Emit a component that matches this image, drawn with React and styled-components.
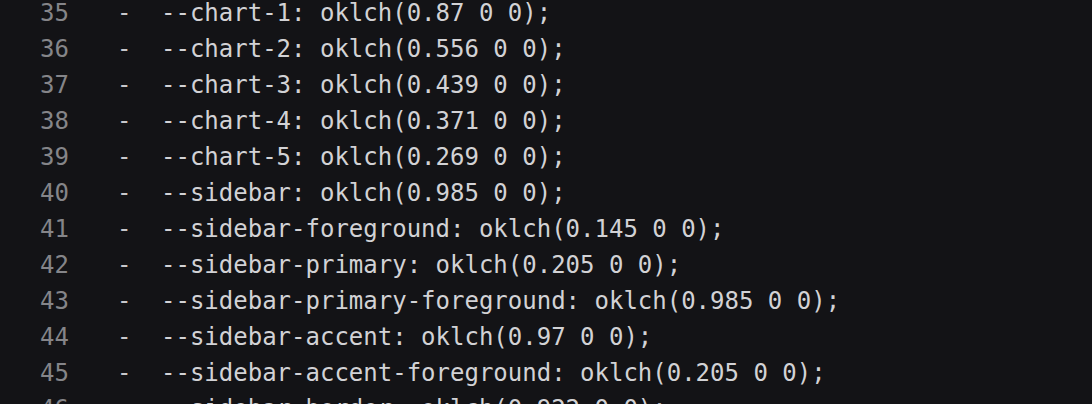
import React from "react";
import styled, { createGlobalStyle } from "styled-components";

const Global = createGlobalStyle`
  html, body { margin: 0; padding: 0; background: #131316; }
  body { overflow: hidden; }
`;

const Viewer = styled.div`
  width: 1092px;
  height: 404px;
  overflow: hidden;
  background: #131316;
  font-family: "DejaVu Sans Mono", "Liberation Mono", monospace;
  font-size: 24px;
`;

const Lines = styled.div`
  display: flex;
  flex-direction: column;
  margin-top: -5px;
`;

const Row = styled.div`
  display: flex;
  align-items: center;
  height: 36px;
  line-height: 36px;
  white-space: pre;
`;

const LineNo = styled.span`
  width: 29px;
  margin-left: 40px;
  text-align: right;
  color: #858589;
`;

const Marker = styled.span`
  width: 44px;
  margin-left: 48px;
  color: #c8c8cb;
`;

const Code = styled.span`
  color: #d2d2d5;
`;

const lines = [
  [35, "--chart-1: oklch(0.87 0 0);"],
  [36, "--chart-2: oklch(0.556 0 0);"],
  [37, "--chart-3: oklch(0.439 0 0);"],
  [38, "--chart-4: oklch(0.371 0 0);"],
  [39, "--chart-5: oklch(0.269 0 0);"],
  [40, "--sidebar: oklch(0.985 0 0);"],
  [41, "--sidebar-foreground: oklch(0.145 0 0);"],
  [42, "--sidebar-primary: oklch(0.205 0 0);"],
  [43, "--sidebar-primary-foreground: oklch(0.985 0 0);"],
  [44, "--sidebar-accent: oklch(0.97 0 0);"],
  [45, "--sidebar-accent-foreground: oklch(0.205 0 0);"],
  [46, "--sidebar-border: oklch(0.922 0 0);"],
];

export default function App() {
  return (
    <>
      <Global />
      <Viewer>
        <Lines>
          {lines.map(([n, code]) => (
            <Row key={n}>
              <LineNo>{n}</LineNo>
              <Marker>-</Marker>
              <Code>{code}</Code>
            </Row>
          ))}
        </Lines>
      </Viewer>
    </>
  );
}
